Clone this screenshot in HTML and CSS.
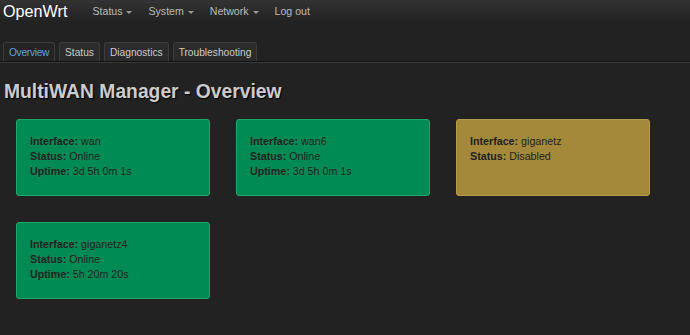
FILE: index.html
```html
<!DOCTYPE html>
<html lang="en">
<head>
  <meta charset="UTF-8" />
  <title>MultiWAN Manager - Overview</title>
  <link rel="stylesheet" href="styles.css">
</head>
<body>
  <!-- Top navbar -->
  <header class="navbar">
    <a class="brand" href="#">OpenWrt</a>
    <ul class="nav">
      <li><a href="#">Status <span class="caret"></span></a></li>
      <li><a href="#">System <span class="caret"></span></a></li>
      <li><a href="#">Network <span class="caret"></span></a></li>
      <li><a href="#">Log out</a></li>
    </ul>
  </header>

  <!-- Tabs -->
  <ul class="tabs">
    <li class="active"><a href="#">Overview</a></li>
    <li><a href="#">Status</a></li>
    <li><a href="#">Diagnostics</a></li>
    <li><a href="#">Troubleshooting</a></li>
  </ul>

  <h2 class="title">MultiWAN Manager - Overview</h2>

  <div class="cards">
    <div class="card online">
      <div><b>Interface:</b> wan</div>
      <div><b>Status:</b> Online</div>
      <div><b>Uptime:</b> 3d 5h 0m 1s</div>
    </div>
    <div class="card online">
      <div><b>Interface:</b> wan6</div>
      <div><b>Status:</b> Online</div>
      <div><b>Uptime:</b> 3d 5h 0m 1s</div>
    </div>
    <div class="card disabled">
      <div><b>Interface:</b> giganetz</div>
      <div><b>Status:</b> Disabled</div>
    </div>
    <div class="card online">
      <div><b>Interface:</b> giganetz4</div>
      <div><b>Status:</b> Online</div>
      <div><b>Uptime:</b> 5h 20m 20s</div>
    </div>
  </div>
</body>
</html>
```

FILE: styles.css
```css
body {
  margin: 0;
  font-family: 'Liberation Sans', Arial, sans-serif;
  font-size: 12px;
  background-color: #222;
  color: #ccc;
}

a {
  text-decoration: none;
}

.navbar {
  height: 22px;
  display: flex;
  align-items: center;
  padding: 0 3px;
  background: linear-gradient(#323232, #222);
}

.brand {
  color: #fff;
  font-size: 16.2px;
  margin-right: 25px;
}

.nav {
  list-style: none;
  margin: 0;
  padding: 0;
  display: flex;
  gap: 16px;
}

.nav a {
  color: #bbb;
  font-size: 10.6px;
}

.caret {
  display: inline-block;
  width: 0;
  height: 0;
  vertical-align: middle;
  border-left: 3px solid transparent;
  border-right: 3px solid transparent;
  border-top: 3px solid #999;
  margin-left: 1px;
}

.tabs {
  list-style: none;
  margin: 20px 0 0;
  padding: 0 3px;
  display: flex;
  gap: 4px;
  border-bottom: 1px solid #111;
  box-shadow: 0 1px 0 #3a3a3a;
}

.tabs li {
  border: 1px solid #3c3c3c;
  border-bottom: none;
  border-radius: 3px 3px 0 0;
  background-color: #2b2b2b;
}

.tabs a {
  display: block;
  padding: 3px 5px 2px;
  color: #ccc;
  font-size: 10.2px;
  line-height: 13px;
}

.tabs li.active {
  background-color: #242424;
}

.tabs li.active a {
  color: #5aa6d6;
  letter-spacing: -0.3px;
}

.title {
  margin: 19px 0 0 4px;
  font-size: 19.3px;
  font-weight: bold;
  color: #ccc;
  text-shadow: 1px 1px 1px #000;
}

.cards {
  display: grid;
  grid-template-columns: repeat(3, 194px);
  gap: 26px;
  padding: 16px 16px;
}

.card {
  height: 77px;
  box-sizing: border-box;
  padding: 14px 13px;
  border-radius: 3px;
  color: #222;
  font-size: 10.7px;
  line-height: 15px;
}

.card.online {
  background-color: #008b55;
  border: 1px solid #1fa869;
}

.card.disabled {
  background-color: #a5893b;
  border: 1px solid #b89a4a;
}
```
